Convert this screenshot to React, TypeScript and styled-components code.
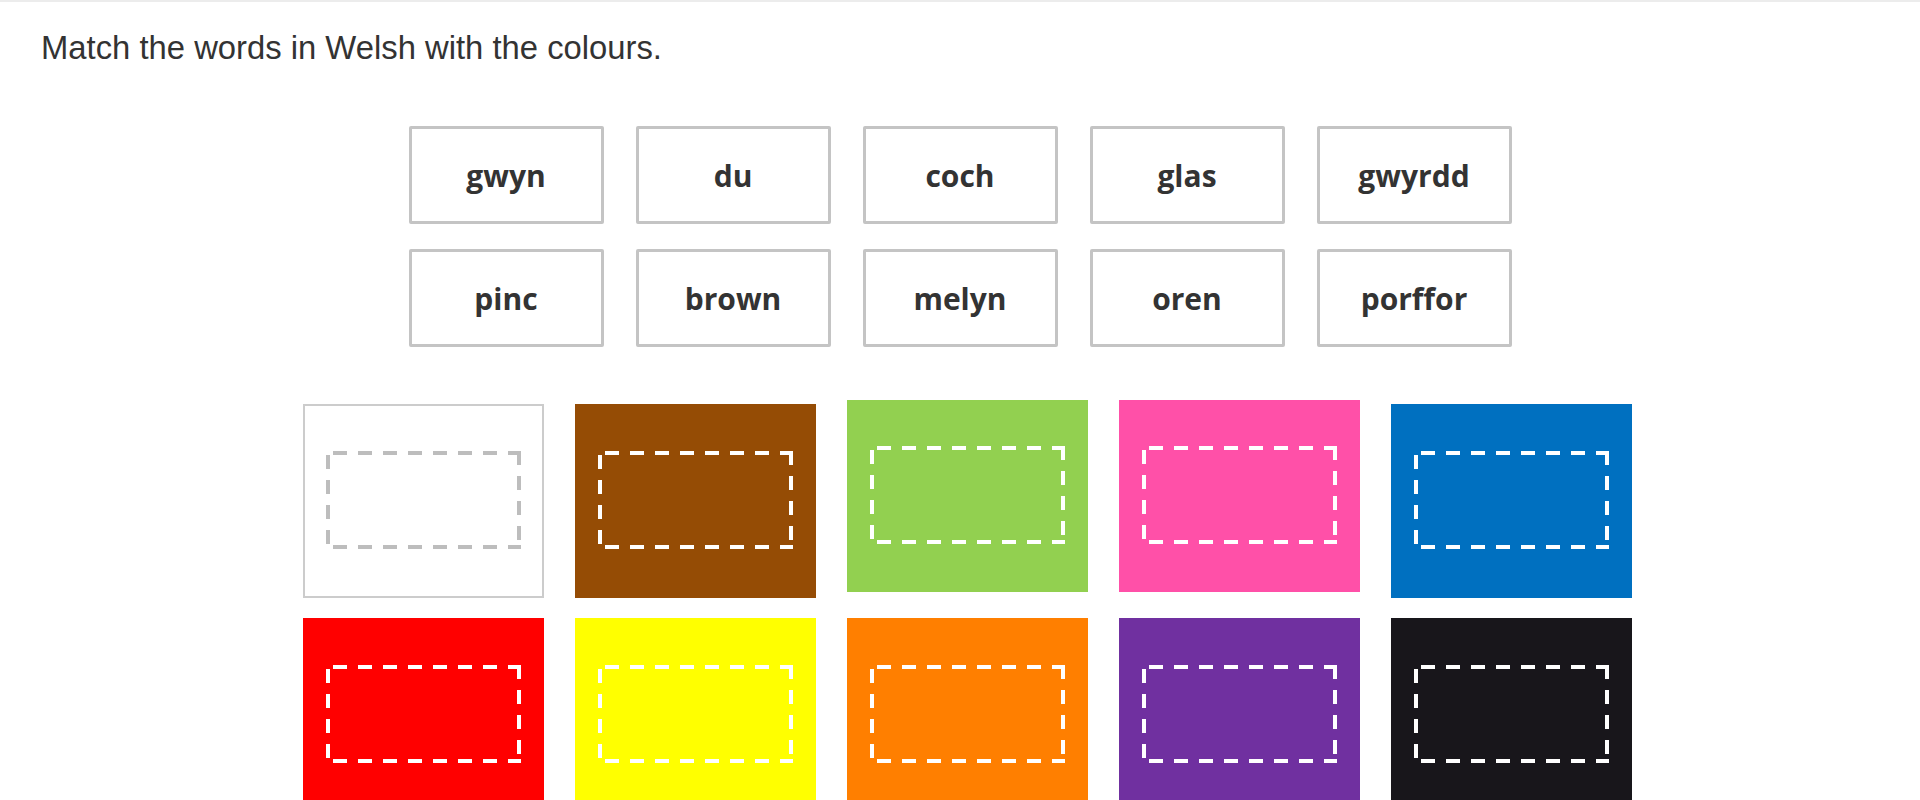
import React from 'react'

import styled, { createGlobalStyle, css } from 'styled-components'

const words = [
  'gwyn',
  'du',
  'coch',
  'glas',
  'gwyrdd',
  'pinc',
  'brown',
  'melyn',
  'oren',
  'porffor',
]

type Swatch = { colour: string; raised?: boolean; outlined?: boolean }

const swatches: Swatch[] = [
  { colour: '#ffffff', outlined: true },
  { colour: '#954c05' },
  { colour: '#92d050', raised: true },
  { colour: '#ff50a8', raised: true },
  { colour: '#0070c0' },
  { colour: '#ff0000' },
  { colour: '#ffff00' },
  { colour: '#ff7f00' },
  { colour: '#7030a0' },
  { colour: '#18161b' },
]

export default function App() {
  return (
    <>
      <GlobalStyle />
      <Page>
        <Title>Match the words in Welsh with the colours.</Title>

        <WordBank>
          {words.map((word) => (
            <WordTile key={word}>{word}</WordTile>
          ))}
        </WordBank>

        <ColourGrid>
          {swatches.map((s) => (
            <ColourSquare
              key={s.colour}
              $colour={s.colour}
              $raised={s.raised}
              $outlined={s.outlined}
            >
              <DropZone $dash={s.outlined ? '#bdbdbd' : '#ffffff'} />
            </ColourSquare>
          ))}
        </ColourGrid>
      </Page>
    </>
  )
}

const GlobalStyle = createGlobalStyle`
  html, body {
    margin: 0;
    padding: 0;
    overflow: hidden;
    background: #ffffff;
  }
`

const Page = styled.div`
  display: flex;
  flex-direction: column;
  width: 100%;
  height: 800px;
  border-top: 2px solid #ececec;
  box-sizing: border-box;
  padding-top: 29px;
  font-family: 'Liberation Sans', Arial, sans-serif;
`

const Title = styled.h1`
  margin: 0;
  padding-left: 41px;
  font-size: 32.8px;
  line-height: 33px;
  font-weight: 400;
  color: #333333;
`

const WordBank = styled.div`
  display: grid;
  grid-template-columns: repeat(5, 195px);
  grid-auto-rows: 98px;
  column-gap: 32px;
  row-gap: 25px;
  justify-content: center;
  margin-top: 62px;
`

const WordTile = styled.div`
  display: flex;
  align-items: center;
  justify-content: center;
  box-sizing: border-box;
  border: 3px solid #c4c4c4;
  border-radius: 2px;
  font-family: 'Open Sans', 'Liberation Sans', sans-serif;
  font-size: 30px;
  font-weight: 700;
  color: #333333;
`

const ColourGrid = styled.div`
  display: grid;
  grid-template-columns: repeat(5, 241px);
  grid-auto-rows: 194px;
  column-gap: 31px;
  row-gap: 20px;
  justify-content: center;
  align-items: start;
  padding-left: 14px;
  margin-top: 57px;
`

const ColourSquare = styled.div<{
  $colour: string
  $raised?: boolean
  $outlined?: boolean
}>`
  display: flex;
  align-items: center;
  justify-content: center;
  box-sizing: border-box;
  height: 194px;
  background: ${(p) => p.$colour};
  ${(p) =>
    p.$outlined &&
    css`
      border: 2px solid #cccccc;
    `}
  ${(p) =>
    p.$raised &&
    css`
      margin-top: -4px;
      height: 192px;
    `}
`

const DropZone = styled.div<{ $dash: string }>`
  width: 195px;
  height: 98px;
  margin-top: -2px;
  background-image: linear-gradient(
      to right,
      ${(p) => p.$dash} 14px,
      transparent 14px
    ),
    linear-gradient(to right, ${(p) => p.$dash} 14px, transparent 14px),
    linear-gradient(to bottom, ${(p) => p.$dash} 14px, transparent 14px),
    linear-gradient(to bottom, ${(p) => p.$dash} 14px, transparent 14px);
  background-size: 25px 4px, 25px 4px, 4px 25px, 4px 25px;
  background-position: 7px 0, 7px 100%, 0 4px, 100% 0;
  background-repeat: repeat-x, repeat-x, repeat-y, repeat-y;
`
